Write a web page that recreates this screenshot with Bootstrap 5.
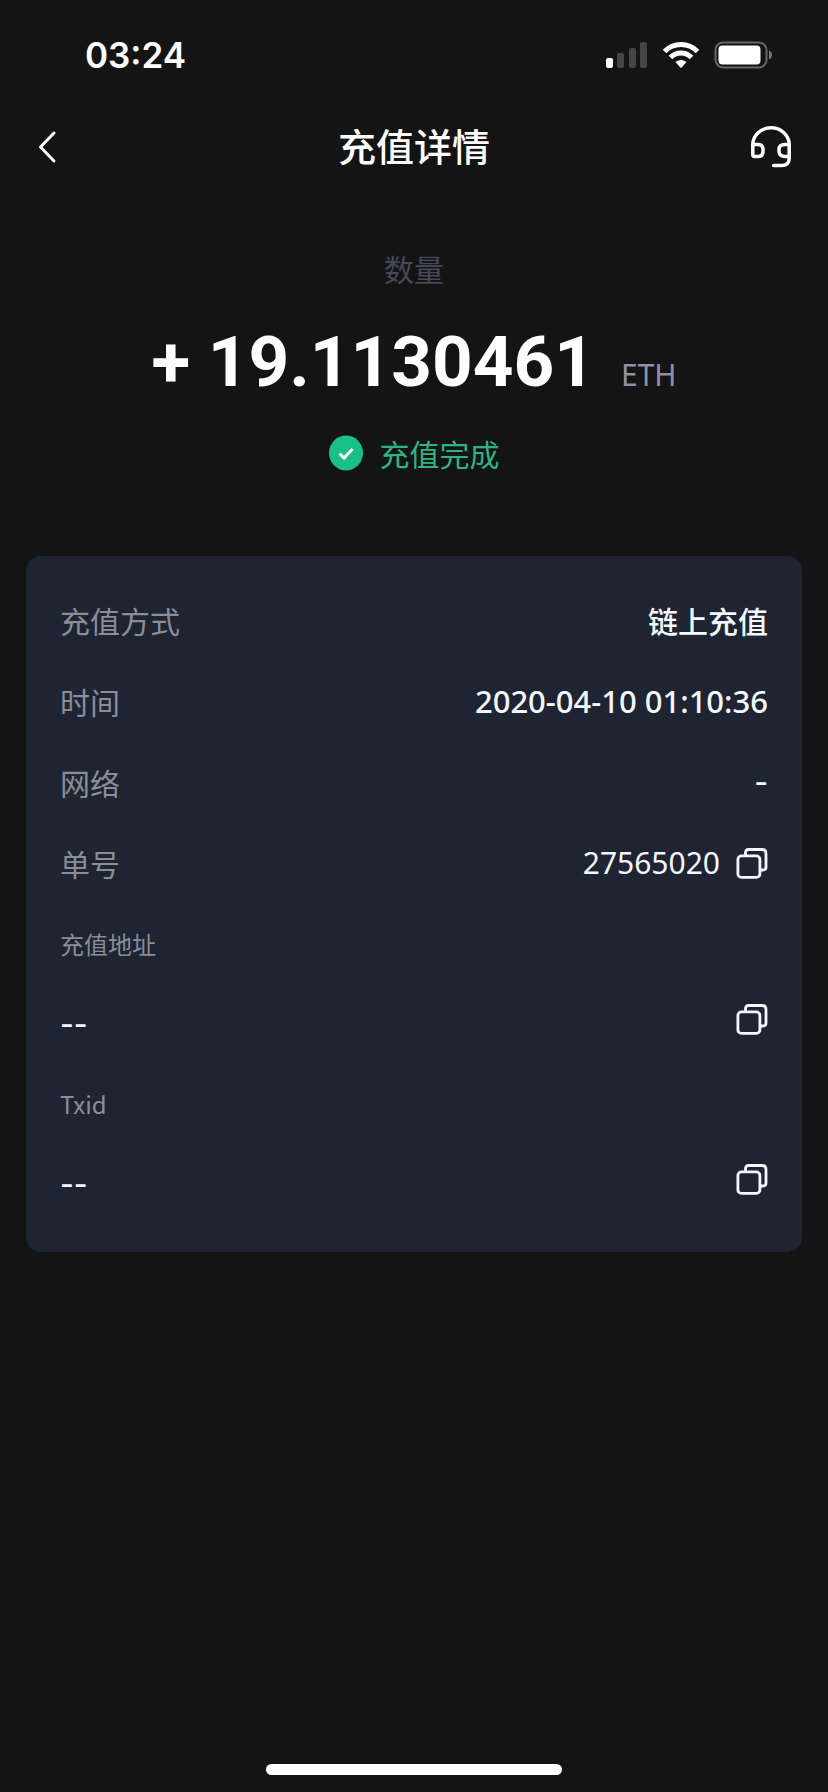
<!DOCTYPE html>
<html lang="zh-CN" data-bs-theme="dark">
<head>
<meta charset="utf-8">
<meta name="viewport" content="width=device-width, initial-scale=1">
<title>充值详情</title>
<link href="https://cdn.jsdelivr.net/npm/bootstrap@5.3.0/dist/css/bootstrap.min.css" rel="stylesheet">
<style>
  body { background: #141414; color: #fff; font-family: "Noto Sans CJK SC", sans-serif; font-size: 30px; line-height: 40px; }
  svg { display: block; fill: none; }
  .status-bar { padding: 35px 56px 35px 85px; }
  .clock { font-family: Inter, sans-serif; font-size: 35px; font-weight: 600; }
  .top-bar { padding: 10px 32px; }
  .top-bar h1 { font-size: 38px; line-height: 50px; font-weight: 500; margin-bottom: 4px; }
  .plain-btn { color: #fff; background: none; border: 0; padding: 0; }
  .side { width: 50px; }
  .summary { padding-top: 64px; }
  .caption { color: #454958; }
  .amount { font-family: Roboto, sans-serif; font-size: 71px; line-height: 80px; font-weight: 700; margin-top: 34px; gap: 26px; }
  .unit { font-family: "Noto Sans", sans-serif; font-size: 30px; line-height: 40px; font-weight: 400; color: #8f90a3; }
  .state { color: #2fb384; margin-top: 31px; gap: 17px; }
  .details { background: #1e2431; border-radius: 15px; margin: 83px 26px 0; padding: 24px 34px 28px; }
  .entry { padding: 20px 0 21px; }
  .entry dt { font-weight: 400; color: #8b8d97; }
  .entry dd { font-weight: 500; color: #f4f7ff; }
  .entry .digits { font-family: "Noto Sans", "Noto Sans CJK SC", sans-serif; }
  .entry .date { font-size: 31px; }
  .entry .blank { font-family: Inter, sans-serif; }
  .entry .order-no { font-weight: 400; }
  .entry.stacked { padding-bottom: 20px; }
  .entry .small-label { font-size: 24px; }
  .home-bar { width: 296px; height: 11px; border-radius: 6px; background: #fff; margin-bottom: 17px; }
</style>
</head>
<body>
<div class="min-vh-100 d-flex flex-column">
  <div class="status-bar d-flex justify-content-between align-items-center">
    <span class="clock">03:24</span>
    <div class="d-flex align-items-center">
      <svg width="166" height="28" viewBox="0 0 166 28" aria-hidden="true">
        <rect x="0" y="17" width="7" height="10" rx="2" fill="#fff"/>
        <g fill="#454545"><rect x="11" y="12" width="7" height="15" rx="2"/><rect x="23" y="7" width="7" height="20" rx="2"/><rect x="34" y="1" width="7" height="26" rx="2"/></g>
        <g stroke="#fff" stroke-width="5"><path d="M58.500 10.500 A23 23 0 0 1 91.500 10.500"/><path d="M64.500 16.500 A14.500 14.500 0 0 1 85.500 16.500"/></g>
        <path d="M69.500 21 Q75 17 80.500 21 L75.700 26.500 Q75 27.200 74.300 26.500Z" fill="#fff"/>
        <rect x="109.500" y="1.500" width="51" height="25" rx="7.500" stroke="#666" stroke-width="2"/>
        <rect x="112.500" y="4.500" width="42" height="19" rx="4" fill="#fff"/>
        <path d="M163 9.500 Q166 11 166 14 T163 18.500Z" fill="#777"/>
      </svg>
    </div>
  </div>

  <header class="top-bar d-flex justify-content-between align-items-center">
    <button type="button" class="plain-btn side" aria-label="返回">
      <svg width="30" height="34" viewBox="0 0 30 34" stroke="#fff" stroke-width="3" stroke-linecap="round" stroke-linejoin="round"><path d="M22 3 8.500 17 22 31"/></svg>
    </button>
    <h1 class="mt-0">充值详情</h1>
    <button type="button" class="plain-btn side" aria-label="客服">
      <svg width="50" height="42" viewBox="0 0 50 42" stroke="#fff" stroke-width="3.500" stroke-linejoin="round" stroke-linecap="round"><path d="M6.800 19.500V18.500a18.200 16.700 0 0 1 36.400 0V32q0 7.500-7.500 7.500h-8"/><path d="M6.800 18.500H12q5 0 5 5v1.500q0 5.500-5 5.500H8.500q-1.700 0-1.700-1.700ZM43.200 18.500H39q-6 0-6 5v1.500q0 5.500 6 5.500h4.200"/></svg>
    </button>
  </header>

  <main>
    <section class="summary text-center">
      <div class="caption">数量</div>
      <div class="amount d-flex justify-content-center align-items-baseline"><span>+ 19.1130461</span><span class="unit">ETH</span></div>
      <div class="state d-flex justify-content-center align-items-center">
        <svg width="34" height="36" viewBox="0 0 34 36" aria-hidden="true"><ellipse cx="17" cy="18" rx="17" ry="17.500" fill="#19c088"/><path d="M10.500 18.500 15 23l8.500-9" stroke="#fff" stroke-width="3"/></svg>
        <span>充值完成</span>
      </div>
    </section>

    <dl class="details mb-0">
      <div class="entry d-flex justify-content-between"><dt>充值方式</dt><dd class="m-0">链上充值</dd></div>
      <div class="entry d-flex justify-content-between"><dt>时间</dt><dd class="m-0 digits date">2020-04-10 01:10:36</dd></div>
      <div class="entry d-flex justify-content-between"><dt>网络</dt><dd class="m-0 blank">-</dd></div>
      <div class="entry d-flex justify-content-between"><dt>单号</dt>
        <dd class="m-0 digits order-no d-flex align-items-center gap-3"><span>27565020</span>
          <button type="button" class="plain-btn" aria-label="复制单号"><svg width="32" height="31" viewBox="0 0 32 31" stroke="#f4f7ff" stroke-width="2.800"><rect x="1.900" y="7.900" width="22" height="21.500" rx="3.500"/><path d="M9.500 7V4.500q0-3 3-3H26q4 0 4 4V19q0 3-3 3H25"/></svg></button>
        </dd>
      </div>
      <div class="entry stacked"><dt class="small-label">充值地址</dt></div>
      <div class="entry stacked d-flex justify-content-between align-items-start"><dd class="m-0 blank">--</dd>
        <button type="button" class="plain-btn" aria-label="复制充值地址"><svg width="32" height="31" viewBox="0 0 32 31" stroke="#f4f7ff" stroke-width="2.800"><rect x="1.900" y="7.900" width="22" height="21.500" rx="3.500"/><path d="M9.500 7V4.500q0-3 3-3H26q4 0 4 4V19q0 3-3 3H25"/></svg></button>
      </div>
      <div class="entry stacked"><dt class="small-label">Txid</dt></div>
      <div class="entry stacked d-flex justify-content-between align-items-start"><dd class="m-0 blank">--</dd>
        <button type="button" class="plain-btn" aria-label="复制 Txid"><svg width="32" height="31" viewBox="0 0 32 31" stroke="#f4f7ff" stroke-width="2.800"><rect x="1.900" y="7.900" width="22" height="21.500" rx="3.500"/><path d="M9.500 7V4.500q0-3 3-3H26q4 0 4 4V19q0 3-3 3H25"/></svg></button>
      </div>
    </dl>
  </main>

  <div class="home-bar mt-auto mx-auto"></div>
</div>
<script src="https://cdn.jsdelivr.net/npm/bootstrap@5.3.0/dist/js/bootstrap.bundle.min.js"></script>
</body>
</html>
